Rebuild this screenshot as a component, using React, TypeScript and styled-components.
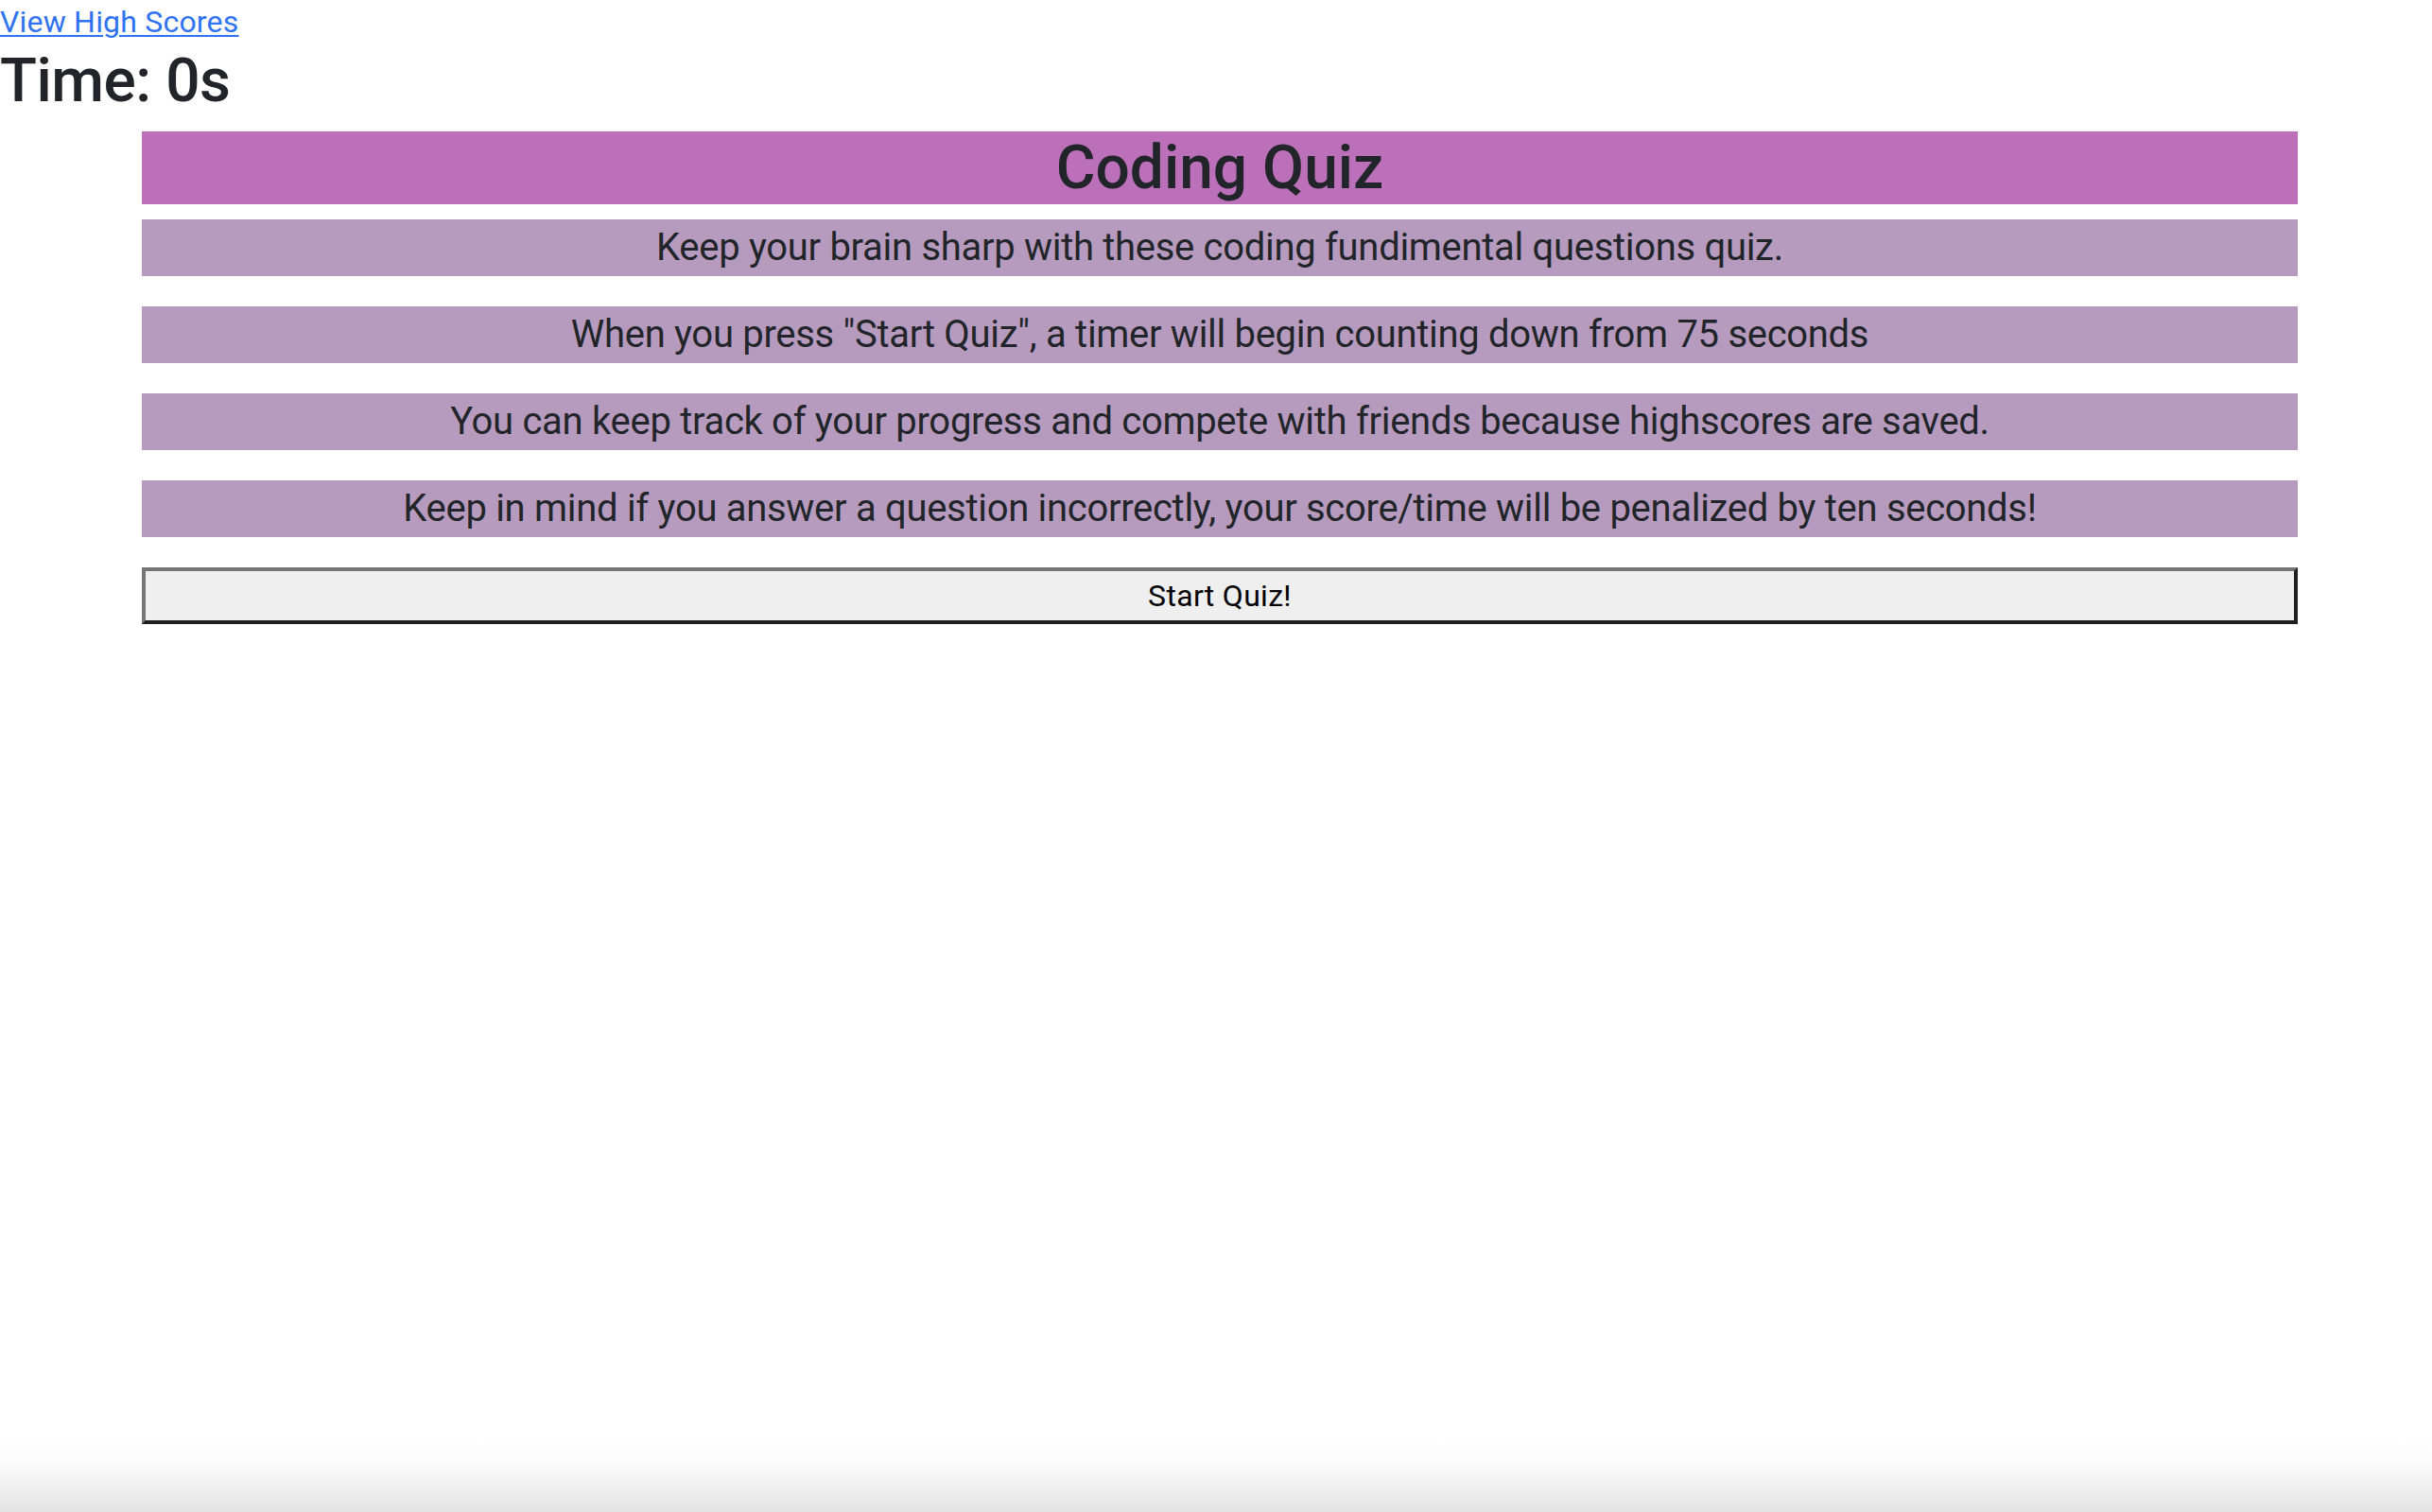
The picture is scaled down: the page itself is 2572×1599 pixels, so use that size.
import React from "react";
import styled, { createGlobalStyle } from "styled-components";

const Global = createGlobalStyle`
  html {
    min-height: 100%;
    background: linear-gradient(to bottom, #ffffff 0, #ffffff calc(100% - 80px), #fbfbfb calc(100% - 50px), #e3e3e3 100%);
  }
  body {
    margin: 0;
    font-family: Roboto, "Noto Sans", sans-serif;
    color: #212529;
    font-size: 32px;
    line-height: 1.5;
  }
  * { box-sizing: border-box; }
`;

const Page = styled.div`
  display: flex;
  flex-direction: column;
  align-items: flex-start;
`;

const TopLink = styled.a`
  color: #2f72f2;
  font-size: 32px;
  line-height: 46px;
  letter-spacing: 0.2px;
  text-decoration: underline;
  text-underline-offset: 3px;
  text-decoration-thickness: 2px;
  cursor: pointer;
`;

const Timer = styled.h2`
  margin: 2px 0 0;
  font-size: 64px;
  font-weight: 500;
  line-height: 1.2;
  letter-spacing: -0.5px;
`;

const Quiz = styled.section`
  align-self: stretch;
  margin: 14px 142px 0 150px;
  display: flex;
  flex-direction: column;
`;

const Title = styled.h2`
  margin: 0 0 16px;
  background: #bc70b9;
  text-align: center;
  font-size: 64px;
  font-weight: 500;
  line-height: 77px;
`;

const Info = styled.p`
  margin: 0 0 32px;
  background: #b79bbf;
  text-align: center;
  font-size: 40px;
  line-height: 60px;
  letter-spacing: -0.3px;
`;

const StartButton = styled.button`
  height: 60px;
  background: #efefef;
  border: 4px solid;
  border-color: #767676 #1f1f1f #1f1f1f #767676;
  font-family: Roboto, "Noto Sans", sans-serif;
  font-size: 32px;
  letter-spacing: 0.3px;
  color: #000;
  cursor: pointer;
  padding: 0;
`;

const lines = [
  "Keep your brain sharp with these coding fundimental questions quiz.",
  'When you press "Start Quiz", a timer will begin counting down from 75 seconds',
  "You can keep track of your progress and compete with friends because highscores are saved.",
  "Keep in mind if you answer a question incorrectly, your score/time will be penalized by ten seconds!",
];

export default function App() {
  return (
    <>
      <Global />
      <Page>
        <TopLink href="#">View High Scores</TopLink>
        <Timer>Time: 0s</Timer>
        <Quiz>
          <Title>Coding Quiz</Title>
          {lines.map((l) => (
            <Info key={l}>{l}</Info>
          ))}
          <StartButton>Start Quiz!</StartButton>
        </Quiz>
      </Page>
    </>
  );
}
